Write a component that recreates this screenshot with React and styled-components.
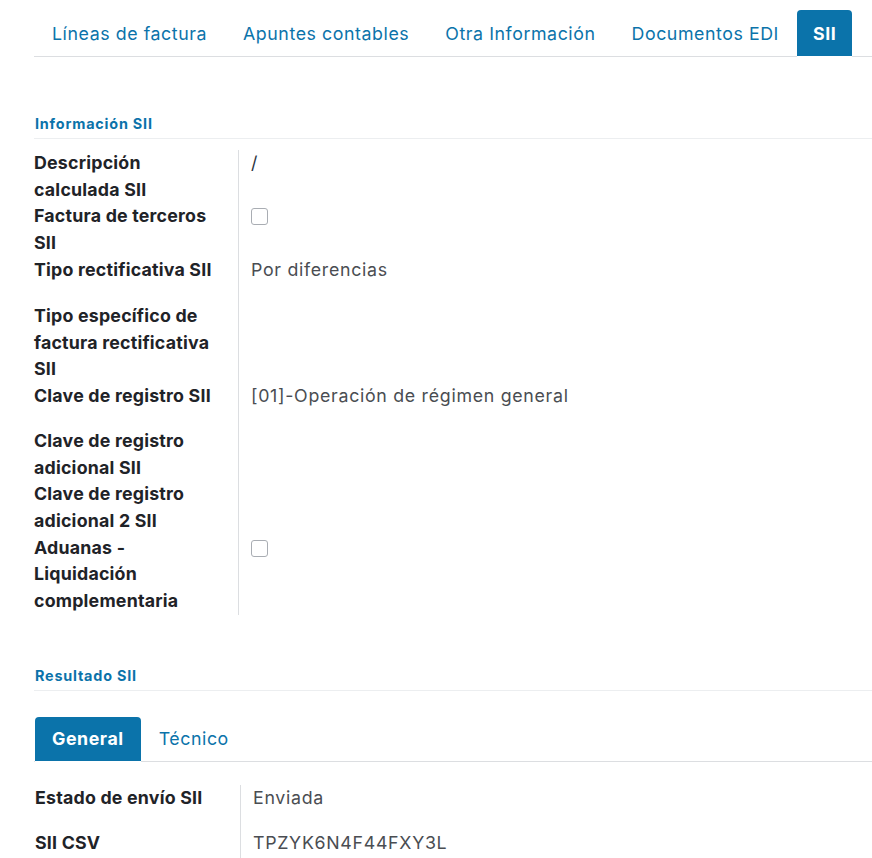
import React from 'react';
import styled, { createGlobalStyle } from 'styled-components';

const BLUE = '#0b73aa';

const GlobalStyle = createGlobalStyle`
  html, body {
    margin: 0;
    padding: 0;
    background: #ffffff;
  }
  body {
    font-family: Inter, "Noto Sans", "Liberation Sans", sans-serif;
    color: #1f2328;
  }
`;

const Page = styled.div`
  padding: 10px 0 0 34px;
  overflow: hidden;
  height: 848px;
`;

const TabBar = styled.div`
  display: flex;
  align-items: flex-end;
  border-bottom: 1px solid #dcdee1;
`;

const Tab = styled.div`
  height: 46px;
  padding: 0 ${(p) => (p.$active ? '16px' : '18px')};
  display: flex;
  align-items: center;
  font-size: 17.8px;
  letter-spacing: 0.56px;
  font-weight: ${(p) => (p.$active ? 700 : 400)};
  color: ${(p) => (p.$active ? '#ffffff' : BLUE)};
  background: ${(p) => (p.$active ? BLUE : 'transparent')};
  border-radius: 4px 4px 0 0;
  margin-bottom: -1px;
  border-bottom: 1px solid ${(p) => (p.$active ? '#ffffff' : 'transparent')};
  box-sizing: content-box;
`;

const SectionTitle = styled.div`
  margin-top: ${(p) => p.$top}px;
  padding: 0 0 3px 1px;
  font-size: 14.4px;
  line-height: 22px;
  letter-spacing: 0.8px;
  font-weight: 700;
  color: ${BLUE};
  border-bottom: 1px solid #eceef0;
`;

const FieldGrid = styled.div`
  display: grid;
  grid-template-columns: ${(p) => p.$label}px 1fr;
  margin-top: ${(p) => p.$top}px;
`;

const Label = styled.div`
  font-size: 17.8px;
  font-weight: 700;
  line-height: 26.7px;
  letter-spacing: 0.2px;
  color: #1f2328;
  padding-right: 6px;
  padding-left: ${(p) => (p.$indent ? 1 : 0)}px;
  border-right: 1px solid #dcdee1;
  min-height: ${(p) => p.$min || 0}px;
`;

const Value = styled.div`
  padding-left: 12px;
  font-size: 17.8px;
  line-height: 26.7px;
  letter-spacing: 0.7px;
  color: #4a4d52;
  min-height: ${(p) => p.$min || 0}px;
`;

const Slash = styled.span`
  color: #2b3440;
`;

const Check = styled.span`
  display: inline-block;
  width: 15px;
  height: 15px;
  margin-top: 5px;
  border: 1px solid #a9adb3;
  border-radius: 3px;
  background: #fff;
`;

const InnerTabBar = styled(TabBar)`
  margin-top: 26px;
  padding-left: 1px;
`;

const InnerTab = styled(Tab)`
  height: 44px;
  padding: 0 ${(p) => (p.$active ? '17px' : '18px')};
`;

const fields = [
  { label: ['Descripción', 'calculada SII'], value: <Slash>/</Slash> },
  { label: ['Factura de terceros', 'SII'], value: <Check /> },
  { label: ['Tipo rectificativa SII'], value: 'Por diferencias', min: 46 },
  { label: ['Tipo específico de', 'factura rectificativa', 'SII'], value: null },
  { label: ['Clave de registro SII'], value: '[01]-Operación de régimen general', min: 45 },
  { label: ['Clave de registro', 'adicional SII'], value: null },
  { label: ['Clave de registro', 'adicional 2 SII'], value: null },
  { label: ['Aduanas -', 'Liquidación', 'complementaria'], value: <Check /> },
];

const results = [
  { label: 'Estado de envío SII', value: 'Enviada' },
  { label: 'SII CSV', value: 'TPZYK6N4F44FXY3L' },
];

const App = () => (
  <>
    <GlobalStyle />
    <Page>
      <TabBar>
        <Tab>Líneas de factura</Tab>
        <Tab>Apuntes contables</Tab>
        <Tab>Otra Información</Tab>
        <Tab>Documentos EDI</Tab>
        <Tab $active>SII</Tab>
      </TabBar>

      <SectionTitle $top={56}>Información SII</SectionTitle>
      <FieldGrid $label={205} $top={11}>
        {fields.map((f, i) => (
          <React.Fragment key={i}>
            <Label $min={f.min}>
              {f.label.map((l, j) => (
                <div key={j}>{l}</div>
              ))}
            </Label>
            <Value $min={f.min}>{f.value}</Value>
          </React.Fragment>
        ))}
      </FieldGrid>

      <SectionTitle $top={50}>Resultado SII</SectionTitle>
      <InnerTabBar>
        <InnerTab $active>General</InnerTab>
        <InnerTab>Técnico</InnerTab>
      </InnerTabBar>
      <FieldGrid $label={207} $top={23}>
        {results.map((r) => (
          <React.Fragment key={r.label}>
            <Label $indent $min={45}>{r.label}</Label>
            <Value $min={45}>{r.value}</Value>
          </React.Fragment>
        ))}
      </FieldGrid>
    </Page>
  </>
);

export default App;
